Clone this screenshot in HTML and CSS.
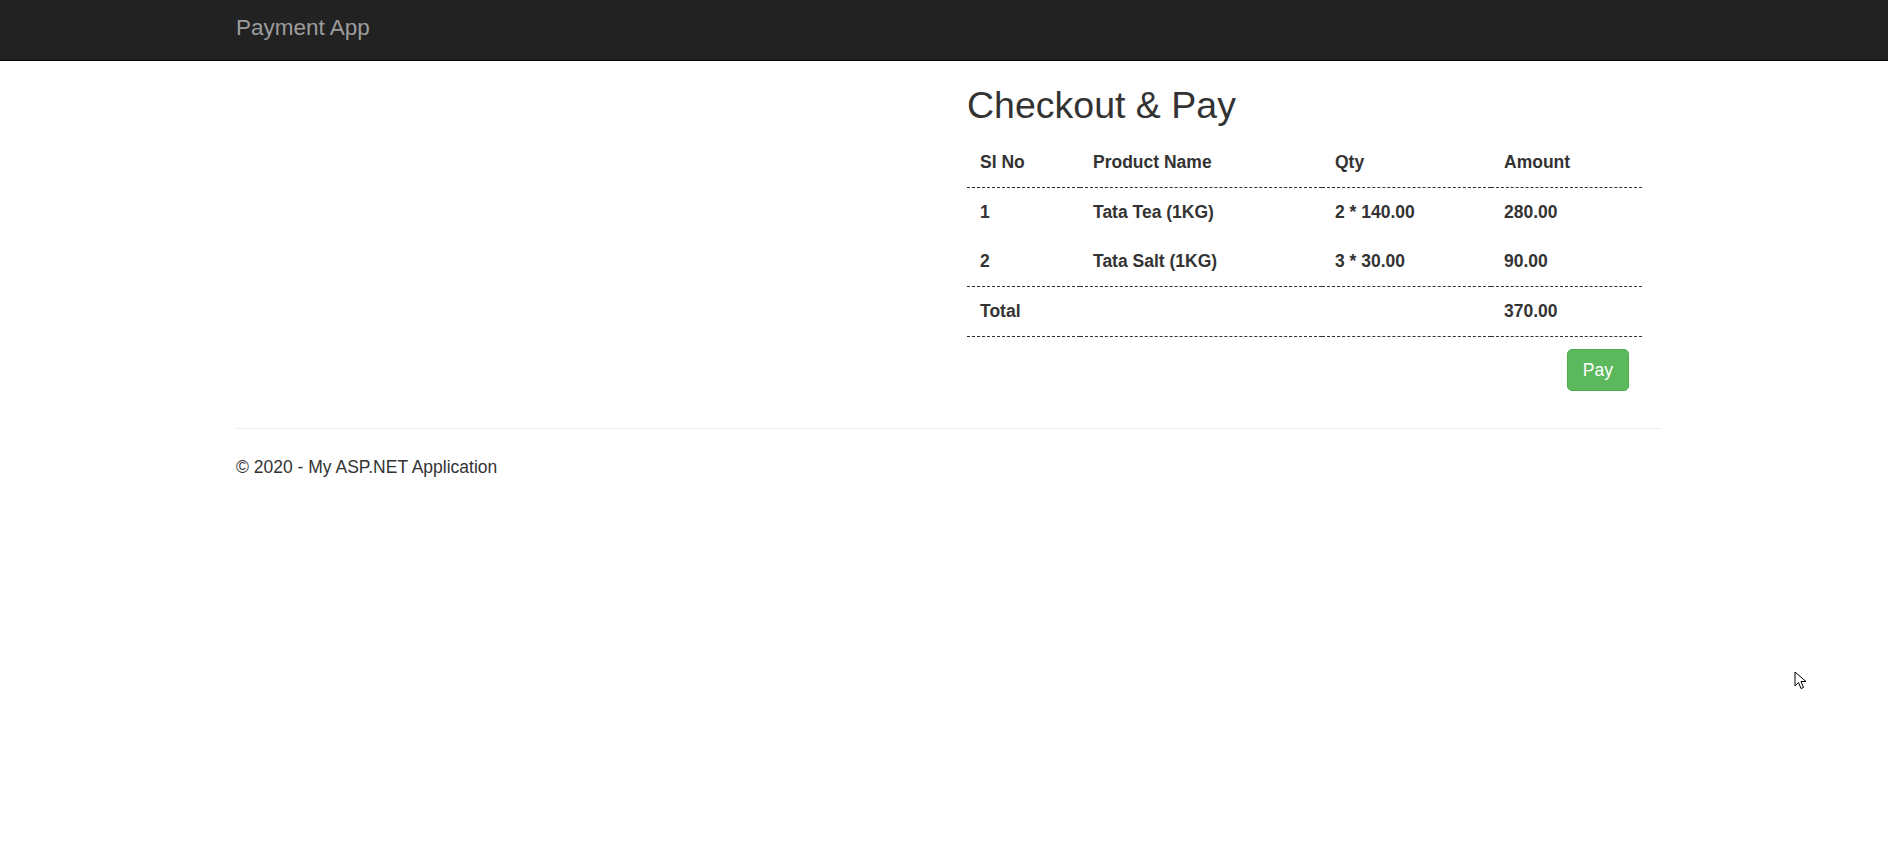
FILE: index.html
```html
<!DOCTYPE html>
<html>
<head>
<meta charset="utf-8">
<title>Checkout &amp; Pay - Payment App</title>
<link rel="stylesheet" href="styles.css">
</head>
<body>
<nav class="navbar">
  <div class="container">
    <a class="brand" href="#">Payment App</a>
  </div>
</nav>
<div class="container body-content">
  <div class="row">
    <div class="col"></div>
    <div class="col col-right">
      <h2 class="title">Checkout &amp; Pay</h2>
      <table class="cart">
        <colgroup>
          <col class="c1"><col class="c2"><col class="c3"><col class="c4">
        </colgroup>
        <thead>
          <tr class="lined"><th>SI No</th><th>Product Name</th><th>Qty</th><th>Amount</th></tr>
        </thead>
        <tbody>
          <tr><td>1</td><td>Tata Tea (1KG)</td><td>2 * 140.00</td><td>280.00</td></tr>
          <tr class="lined"><td>2</td><td>Tata Salt (1KG)</td><td>3 * 30.00</td><td>90.00</td></tr>
          <tr class="lined"><td>Total</td><td></td><td></td><td>370.00</td></tr>
          <tr class="pay-row"><td></td><td></td><td></td><td class="pay-cell"><button class="btn-pay" type="button">Pay</button></td></tr>
        </tbody>
      </table>
    </div>
  </div>
  <hr class="sep">
  <footer class="footer">
    <p>&copy; 2020 - My ASP.NET Application</p>
  </footer>
</div>
<div class="cursor">
  <svg width="14" height="20" viewBox="0 0 14 20"><path d="M1 1 L1 15 L4.5 11.5 L7 17.5 L9.5 16.5 L7 10.5 L12 10.5 Z" fill="#fff" stroke="#000" stroke-width="1" stroke-linejoin="miter"/></svg>
</div>
</body>
</html>
```
FILE: styles.css
```css
* { box-sizing: border-box; }
html, body { margin: 0; padding: 0; }
body {
  font-family: "Liberation Sans", Arial, Helvetica, sans-serif;
  font-size: 17.5px;
  line-height: 25px;
  color: #333;
  background: #fff;
  min-height: 865px;
  position: relative;
}
.container {
  width: 1426px;
  margin-left: 236px;
}
.navbar {
  background: #222;
  height: 61px;
  border-bottom: 1px solid #080808;
}
.brand {
  display: inline-block;
  padding-top: 16px;
  font-size: 22.5px;
  line-height: 24px;
  color: #9d9d9d;
  text-decoration: none;
}
.row {
  display: grid;
  grid-template-columns: 1fr 1fr;
}
.col-right {
  padding: 0 20px 0 18px;
}
.title {
  margin: 24px 0 12px;
  font-size: 37.5px;
  font-weight: 500;
  line-height: 41px;
  color: #333;
}
.cart {
  width: 675px;
  border-collapse: collapse;
  table-layout: fixed;
}
.c1 { width: 113px; }
.c2 { width: 242px; }
.c3 { width: 169px; }
.c4 { width: 151px; }
.cart th, .cart td {
  text-align: left;
  font-weight: bold;
  padding: 12px 13px;
  line-height: 25px;
  vertical-align: top;
}
.cart tr.lined th, .cart tr.lined td {
  border-bottom: 1px dashed #333;
}
.cart .pay-row td {
  padding-top: 12px;
  padding-bottom: 12px;
}
.cart .pay-cell { text-align: right; }
.btn-pay {
  font-family: "Liberation Sans", Arial, Helvetica, sans-serif;
  font-size: 17.5px;
  line-height: 25px;
  padding: 7.5px 15px;
  color: #fff;
  background: #5cb85c;
  border: 1px solid #4cae4c;
  border-radius: 5px;
  cursor: pointer;
}
.sep {
  margin: 25px 0 26px;
  border: 0;
  border-top: 1px solid #eee;
}
.footer p { margin: 0; }
.cursor {
  position: absolute;
  left: 1794px;
  top: 671px;
  width: 14px;
  height: 20px;
}
.cursor svg { display: block; }
```
